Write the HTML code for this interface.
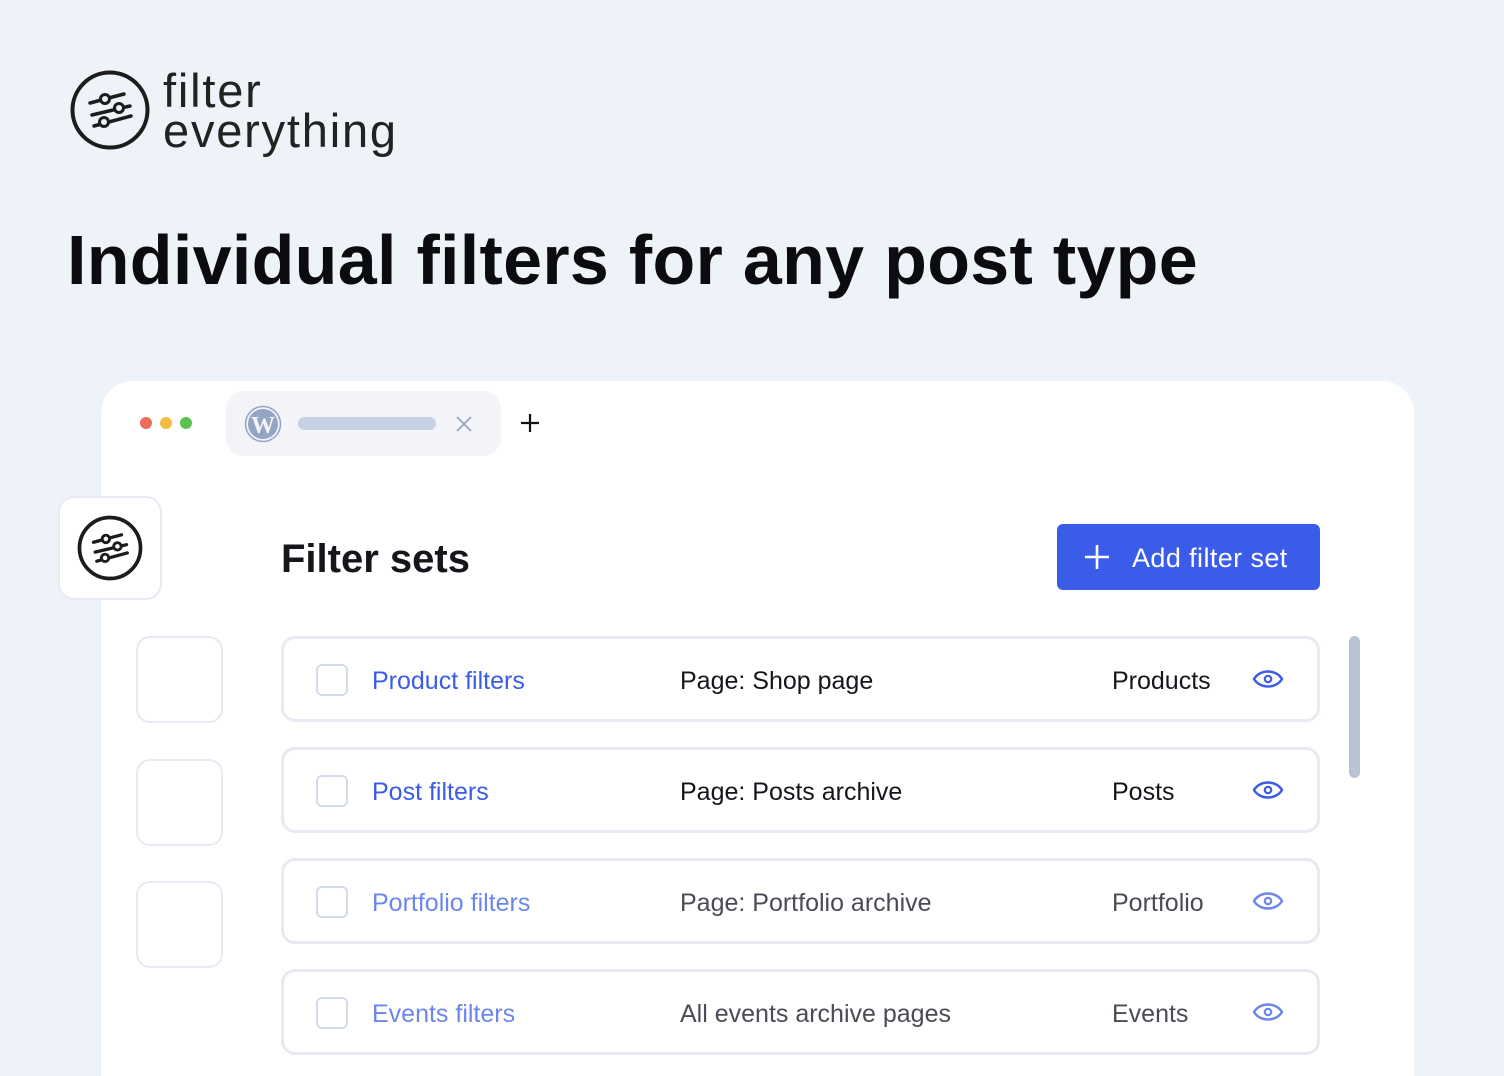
<!DOCTYPE html>
<html><head><meta charset="utf-8"><style>
*{margin:0;padding:0;box-sizing:border-box}
html{overflow:hidden;width:1504px;height:1076px}
body{width:1504px;height:1076px;background:#eef2f9;font-family:"Liberation Sans",sans-serif;position:relative;overflow:hidden;color:#15161c}
.abs{position:absolute}
.card{left:101px;top:381px;width:1313px;height:695px;background:#fff;border-radius:32px 32px 0 0}
.row{left:281px;width:1039px;height:86px;border:3px solid #e7eaf2;border-radius:14px;background:#fff}
.cb{position:absolute;left:32px;top:25px;width:32px;height:32px;border:2px solid #d3dbe8;border-radius:6px}
.t{position:absolute;top:2px;line-height:80px;font-size:25px}
.n{left:88px;color:#3a5ce9}
.p{left:396px}
.ty{left:828px}
.eye{position:absolute;left:968px;top:28px}
.sq{left:136px;width:87px;height:87px;border:2px solid #e7eaf2;border-radius:14px;background:#fff}
.fade .n{color:#6c86ee}.fade .p,.fade .ty{color:#4a4c55}
</style></head><body>
<svg class="abs" style="left:70px;top:70px" width="80" height="80" viewBox="0 0 80 80" fill="none" stroke="#1c1c1c" stroke-width="4" stroke-linecap="round">
<circle cx="40" cy="40" r="37.5"/>
<path d="M20 33 L54 24 M22 45 L60 36 M24 56 L61 46" stroke-width="3.5"/>
<circle cx="35" cy="29" r="4.5" fill="#eef2f9" stroke-width="3"/>
<circle cx="49" cy="38" r="4.5" fill="#eef2f9" stroke-width="3"/>
<circle cx="34" cy="52" r="4.5" fill="#eef2f9" stroke-width="3"/>
</svg>
<div class="abs" style="left:163px;top:71px;font-size:47px;line-height:40px;color:#222;letter-spacing:1.8px">filter<br>everything</div>
<div class="abs" style="left:67px;top:218px;font-size:70px;font-weight:bold;line-height:84px;color:#0c0c10;letter-spacing:0.3px">Individual filters for any post type</div>

<div class="abs card"></div>
<div class="abs" style="left:140px;top:417px;width:12px;height:12px;border-radius:6px;background:#ee6a5b"></div>
<div class="abs" style="left:160px;top:417px;width:12px;height:12px;border-radius:6px;background:#f4bd42"></div>
<div class="abs" style="left:180px;top:417px;width:12px;height:12px;border-radius:6px;background:#5cc24f"></div>
<div class="abs" style="left:226px;top:391px;width:275px;height:65px;border-radius:18px;background:#f2f4f8"></div>
<svg class="abs" style="left:244px;top:405px" width="38" height="38" viewBox="0 0 38 38">
<circle cx="19" cy="19" r="17.5" fill="none" stroke="#93a4c4" stroke-width="1.5"/>
<circle cx="19" cy="19" r="15" fill="#93a4c4"/>
<text x="19" y="28" text-anchor="middle" font-family="Liberation Serif" font-weight="bold" font-size="24" fill="#f2f4f8">W</text>
</svg>
<div class="abs" style="left:298px;top:417px;width:138px;height:13px;border-radius:7px;background:#c6d1e3"></div>
<svg class="abs" style="left:455px;top:415px" width="18" height="18"><path d="M2 2L16 16M16 2L2 16" stroke="#98a6c0" stroke-width="1.8"/></svg>
<svg class="abs" style="left:520px;top:413px" width="20" height="20"><path d="M10 1V19M1 10H19" stroke="#111" stroke-width="2.2"/></svg>

<div class="abs" style="left:58px;top:496px;width:104px;height:104px;border:2px solid #e7eaf2;border-radius:16px;background:#fff"></div>
<svg class="abs" style="left:77px;top:515px" width="66" height="66" viewBox="0 0 80 80" fill="none" stroke="#1c1c1c" stroke-width="4.5" stroke-linecap="round">
<circle cx="40" cy="40" r="37"/>
<path d="M20 33 L54 24 M22 45 L60 36 M24 56 L61 46" stroke-width="4"/>
<circle cx="35" cy="29" r="4.5" fill="#fff" stroke-width="3.5"/>
<circle cx="49" cy="38" r="4.5" fill="#fff" stroke-width="3.5"/>
<circle cx="34" cy="52" r="4.5" fill="#fff" stroke-width="3.5"/>
</svg>

<div class="abs" style="left:281px;top:535px;font-size:40px;font-weight:bold;line-height:48px">Filter sets</div>
<div class="abs" style="left:1057px;top:524px;width:263px;height:66px;background:#3a5ce9;border-radius:6px;color:#fff;font-size:27px;line-height:68px">
<svg class="abs" style="left:28px;top:21px" width="24" height="24"><path d="M12 0V24M0 12H24" stroke="#fff" stroke-width="2.6"/></svg>
<span class="abs" style="left:75px;top:0;letter-spacing:0.4px">Add filter set</span></div>

<div class="abs" style="left:1349px;top:636px;width:11px;height:142px;border-radius:6px;background:#b9c3d6"></div>

<div class="abs sq" style="top:636px"></div>
<div class="abs sq" style="top:759px"></div>
<div class="abs sq" style="top:881px"></div>

<div class="abs row" style="top:636px"><div class="cb"></div><div class="t n">Product filters</div><div class="t p">Page: Shop page</div><div class="t ty">Products</div>
<svg class="eye" width="32" height="24" viewBox="0 0 32 24"><path d="M2 12C8 2 24 2 30 12C24 22 8 22 2 12Z" fill="none" stroke="#3a5ce9" stroke-width="2.4"/><circle cx="16" cy="12" r="3.2" fill="none" stroke="#3a5ce9" stroke-width="2.2"/></svg></div>
<div class="abs row" style="top:747px"><div class="cb"></div><div class="t n">Post filters</div><div class="t p">Page: Posts archive</div><div class="t ty">Posts</div>
<svg class="eye" width="32" height="24" viewBox="0 0 32 24"><path d="M2 12C8 2 24 2 30 12C24 22 8 22 2 12Z" fill="none" stroke="#3a5ce9" stroke-width="2.4"/><circle cx="16" cy="12" r="3.2" fill="none" stroke="#3a5ce9" stroke-width="2.2"/></svg></div>
<div class="abs row fade" style="top:858px"><div class="cb"></div><div class="t n">Portfolio filters</div><div class="t p">Page: Portfolio archive</div><div class="t ty">Portfolio</div>
<svg class="eye" width="32" height="24" viewBox="0 0 32 24"><path d="M2 12C8 2 24 2 30 12C24 22 8 22 2 12Z" fill="none" stroke="#6c86ee" stroke-width="2.4"/><circle cx="16" cy="12" r="3.2" fill="none" stroke="#6c86ee" stroke-width="2.2"/></svg></div>
<div class="abs row fade" style="top:969px"><div class="cb"></div><div class="t n">Events filters</div><div class="t p">All events archive pages</div><div class="t ty">Events</div>
<svg class="eye" width="32" height="24" viewBox="0 0 32 24"><path d="M2 12C8 2 24 2 30 12C24 22 8 22 2 12Z" fill="none" stroke="#6c86ee" stroke-width="2.4"/><circle cx="16" cy="12" r="3.2" fill="none" stroke="#6c86ee" stroke-width="2.2"/></svg></div>
</body></html>
